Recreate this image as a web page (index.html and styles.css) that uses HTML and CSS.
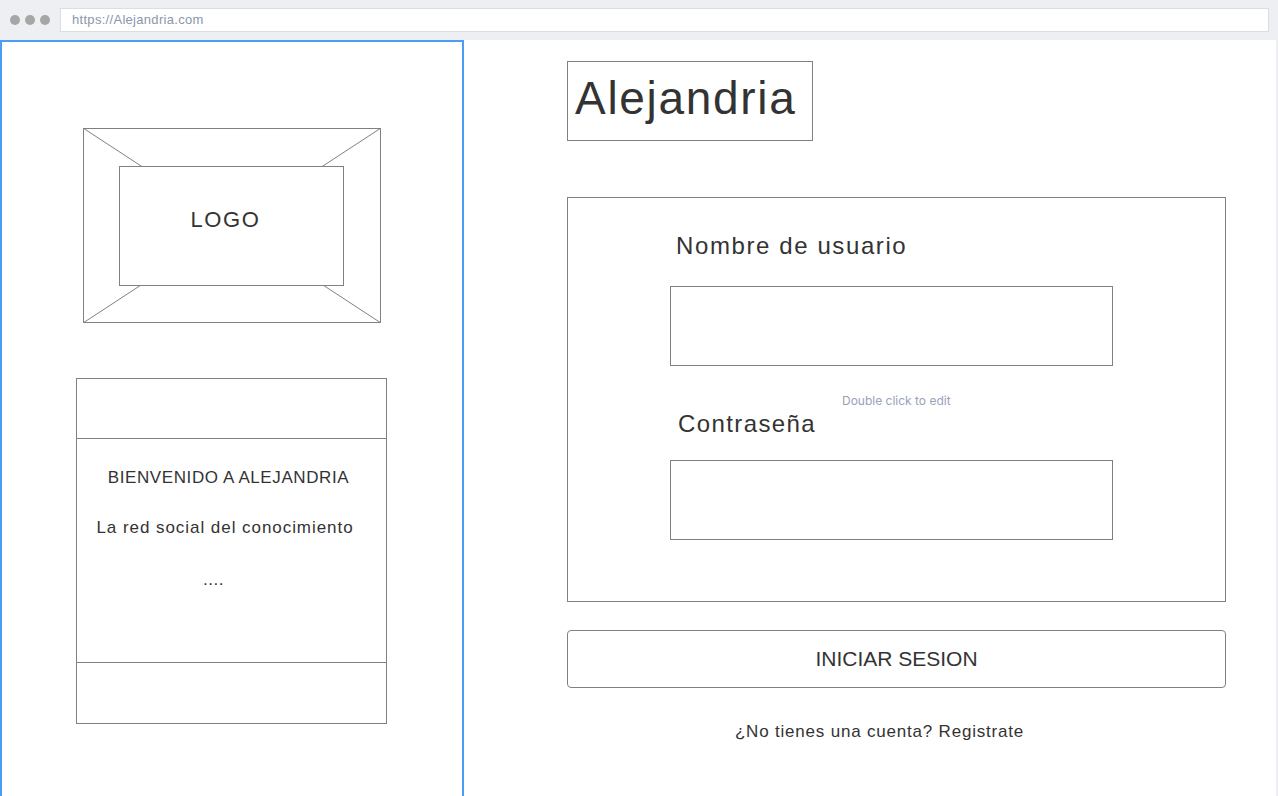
FILE: index.html
```html
<!DOCTYPE html>
<html lang="es">
<head>
<meta charset="utf-8">
<title>Alejandria</title>
<link rel="stylesheet" href="styles.css">
</head>
<body>
<div class="browser-bar">
  <div class="dots"><span class="dot"></span><span class="dot"></span><span class="dot"></span></div>
  <div class="url">https://Alejandria.com</div>
</div>
<div class="page">
  <aside class="left-panel">
    <div class="logo">
      <svg class="logo-lines" width="298" height="195" viewBox="0 0 298 195" aria-hidden="true">
        <line x1="0" y1="0" x2="298" y2="195" stroke="#808080" stroke-width="1"/>
        <line x1="298" y1="0" x2="0" y2="195" stroke="#808080" stroke-width="1"/>
      </svg>
      <div class="logo-inner"><span class="logo-text">LOGO</span></div>
    </div>
    <div class="welcome-card">
      <div class="card-row card-top"></div>
      <div class="card-row card-body">
        <p class="welcome-title">BIENVENIDO A ALEJANDRIA</p>
        <p class="welcome-sub">La red social del conocimiento</p>
        <p class="welcome-dots">....</p>
      </div>
      <div class="card-row card-bottom"></div>
    </div>
  </aside>
  <main class="right-col">
    <div class="brand"><h1 class="brand-title">Alejandria</h1></div>
    <form class="login-form">
      <label class="field-label label-user">Nombre de usuario</label>
      <div class="field-box"></div>
      <span class="edit-hint">Double click to edit</span>
      <label class="field-label label-pass">Contraseña</label>
      <div class="field-box"></div>
    </form>
    <button class="login-btn" type="button">INICIAR SESION</button>
    <p class="register">¿No tienes una cuenta? Registrate</p>
  </main>
  <div class="edge"></div>
</div>
</body>
</html>
```

FILE: styles.css
```css
* { box-sizing: border-box; }
html, body { margin: 0; padding: 0; }
body {
  width: 1278px;
  height: 796px;
  overflow: hidden;
  background: #ffffff;
  font-family: "Liberation Sans", Arial, sans-serif;
  color: #333333;
}

.browser-bar {
  height: 40px;
  background: #eeeff3;
  display: flex;
  align-items: flex-start;
  padding-top: 8px;
}
.dots {
  display: flex;
  gap: 5px;
  padding: 7px 0 0 10px;
  width: 60px;
}
.dot {
  width: 10px;
  height: 10px;
  border-radius: 50%;
  background: #a6a6a6;
}
.url {
  width: 1209px;
  height: 24px;
  background: #ffffff;
  border: 1px solid #dcdde1;
  font-size: 13px;
  line-height: 22px;
  padding-left: 11px;
  color: #8b96ac;
  letter-spacing: 0.3px;
}

.page {
  display: flex;
  height: 756px;
}

.left-panel {
  width: 464px;
  height: 760px;
  border: 2px solid #4a9cf6;
  display: flex;
  flex-direction: column;
  align-items: center;
  padding-top: 86px;
  flex-shrink: 0;
}

.logo {
  position: relative;
  width: 298px;
  height: 195px;
  border: 1px solid #808080;
  display: flex;
  align-items: center;
  justify-content: center;
  margin-right: 1px;
}
.logo-lines {
  position: absolute;
  left: -1px;
  top: -1px;
}
.logo-inner {
  position: relative;
  width: 225px;
  height: 120px;
  border: 1px solid #808080;
  background: #ffffff;
  display: flex;
  align-items: center;
  justify-content: center;
  padding: 0 12px 12px 0;
}
.logo-text {
  font-size: 22px;
  letter-spacing: 1.6px;
  color: #333;
}

.welcome-card {
  margin-top: 55px;
  margin-right: 1px;
  width: 311px;
  border: 1px solid #808080;
  display: flex;
  flex-direction: column;
}
.card-top { height: 60px; border-bottom: 1px solid #808080; }
.card-body {
  height: 224px;
  border-bottom: 1px solid #808080;
  display: flex;
  flex-direction: column;
  align-items: center;
  padding-top: 29px;
}
.card-bottom { height: 60px; }
.card-body p { margin: 0; line-height: 20px; }
.welcome-title {
  font-size: 17px;
  letter-spacing: 0.6px;
  margin-right: 6px !important;
}
.welcome-sub {
  font-size: 17px;
  letter-spacing: 0.95px;
  margin-top: 30px !important;
  margin-right: 13px !important;
}
.welcome-dots {
  font-size: 17px;
  margin-top: 32px !important;
  margin-right: 36px !important;
  letter-spacing: 0.5px;
}

.right-col {
  flex: 1;
  padding-left: 103px;
  padding-top: 21px;
  display: flex;
  flex-direction: column;
}
.brand {
  width: 246px;
  height: 80px;
  border: 1px solid #808080;
  display: flex;
  align-items: center;
  padding-left: 7px;
}
.brand-title {
  margin: 0;
  font-weight: normal;
  font-size: 46px;
  letter-spacing: 1.7px;
  line-height: 1;
  color: #333;
  padding-bottom: 6px;
}

.login-form {
  position: relative;
  margin: 56px 0 0 0;
  width: 659px;
  height: 405px;
  border: 1px solid #808080;
  display: flex;
  flex-direction: column;
  padding: 33px 0 0 102px;
}
.field-label {
  font-size: 24px;
  line-height: 30px;
  letter-spacing: 1.6px;
  color: #333;
}
.label-user { margin-left: 6px; }
.label-pass { margin: 43px 0 0 8px; letter-spacing: 1.4px; }
.field-box {
  width: 443px;
  height: 80px;
  border: 1px solid #808080;
  margin-top: 25px;
}
.label-pass + .field-box { margin-top: 21px; }
.edit-hint {
  position: absolute;
  left: 274px;
  top: 196px;
  font-family: Inter, "Liberation Sans", sans-serif;
  font-size: 12px;
  line-height: 14px;
  color: #98a2b8;
}

.login-btn {
  margin-top: 28px;
  width: 659px;
  height: 58px;
  border: 1px solid #808080;
  border-radius: 4px;
  background: #ffffff;
  font-family: "Liberation Sans", Arial, sans-serif;
  font-size: 21px;
  color: #333;
  padding: 0;
}
.register {
  margin: 34px 0 0 0;
  width: 659px;
  text-align: center;
  font-size: 17px;
  line-height: 20px;
  letter-spacing: 0.8px;
  padding-right: 34px;
  color: #333;
}

.edge {
  width: 2px;
  background: #eeeff3;
  flex-shrink: 0;
}
```
